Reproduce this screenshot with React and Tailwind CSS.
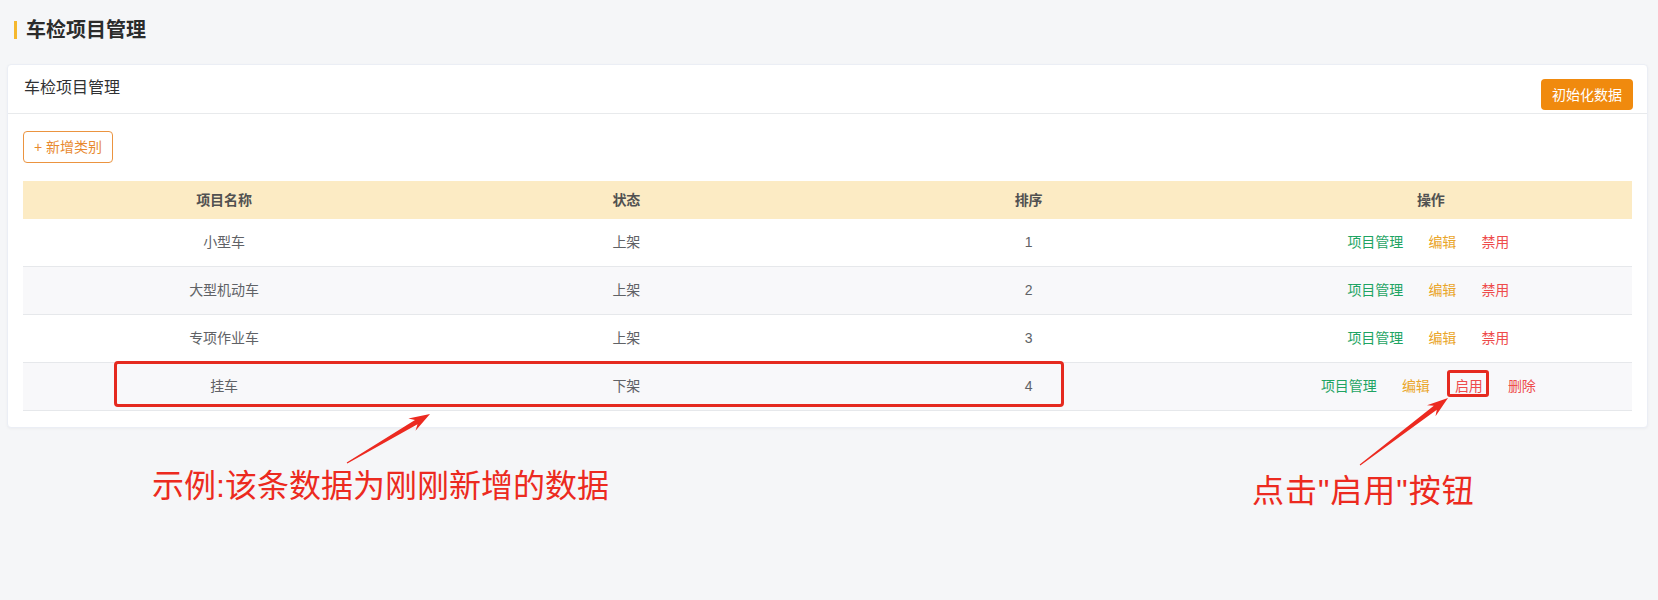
const rows = [
  { name: '小型车', status: '上架', order: 1, enabled: true },
  { name: '大型机动车', status: '上架', order: 2, enabled: true },
  { name: '专项作业车', status: '上架', order: 3, enabled: true },
  { name: '挂车', status: '下架', order: 4, enabled: false },
];

export default function App() {
  return (
    <div className="relative min-h-[600px] w-full overflow-hidden bg-[#f5f6f8] font-['Liberation_Sans','Noto_Sans_CJK_SC',sans-serif] text-[14px] text-[#606266]">
      {/* page title */}
      <div className="flex h-[44px] items-center pl-[14px] pt-4">
        <span className="h-[18px] w-[3px] bg-[#f5b82e]" />
        <h1 className="ml-[9px] text-[20px] font-bold leading-7 text-[#2b2b2b]">车检项目管理</h1>
      </div>

      {/* card */}
      <div className="ml-[7px] mr-[10px] mt-5 rounded-[4px] border border-[#ebeef5] bg-white shadow-[0_1px_3px_rgba(0,0,0,0.04)]">
        <div className="flex h-[49px] items-start justify-between border-b border-[#e8eaec] pl-4 pr-[14px]">
          <span className="pt-[11px] text-[16px] leading-6 text-[#303133]">车检项目管理</span>
          <button className="mt-[14px] h-[31px] rounded-[4px] bg-[#f08a0e] px-[11px] text-[14px] leading-none text-white">
            初始化数据
          </button>
        </div>

        <div className="px-[15px] pb-4 pt-[17px]">
          <button className="h-[32px] rounded-[4px] border border-[#eb9440] bg-white px-[10px] text-[14px] leading-none text-[#e8892f]">
            + 新增类别
          </button>

          <div className="mt-[18px]">
            <div className="grid h-[38px] grid-cols-4 items-center bg-[#fcebc4] text-center font-bold text-[#515151]">
              <div>项目名称</div>
              <div>状态</div>
              <div>排序</div>
              <div>操作</div>
            </div>
            {rows.map((r, i) => (
              <div
                key={r.name}
                className={`grid h-[48px] grid-cols-4 items-center border-b border-[#e6e8eb] text-center ${
                  i % 2 === 1 ? 'bg-[#f8f8fa]' : 'bg-white'
                }`}
              >
                <div>{r.name}</div>
                <div>{r.status}</div>
                <div>{r.order}</div>
                <div className="flex justify-center gap-[25px] pr-[5px]">
                  <span className="text-[#1ea463]">项目管理</span>
                  <span className="text-[#eaa62a]">编辑</span>
                  {r.enabled ? (
                    <span className="text-[#ee4b4b]">禁用</span>
                  ) : (
                    <>
                      <span className="text-[#ee4b4b]">启用</span>
                      <span className="text-[#ee4b4b]">删除</span>
                    </>
                  )}
                </div>
              </div>
            ))}
          </div>
        </div>
      </div>

      {/* annotations */}
      <div className="pointer-events-none absolute left-[114px] top-[361px] h-[46px] w-[950px] rounded-[4px] border-[3px] border-[#e52a1f]" />
      <div className="pointer-events-none absolute left-[1447px] top-[370px] h-[27px] w-[42px] rounded-[3px] border-[3px] border-[#e52a1f]" />

      <svg className="pointer-events-none absolute left-0 top-0" width="1658" height="600" viewBox="0 0 1658 600">
        <polygon
          fill="#ec2a20"
          points="347.3,463.4 417.5,424.3 415.5,430.7 430,414 408.4,418.6 415,420 346.7,462.6"
        />
        <polygon
          fill="#ec2a20"
          points="1360.3,465.4 1436.8,409.7 1435.5,416.3 1448,398 1427,405.2 1433.8,405.7 1359.7,464.6"
        />
      </svg>

      <div className="absolute left-[152px] top-[470px] whitespace-nowrap text-[32px] leading-none text-[#ec2a20]">
        示例:该条数据为刚刚新增的数据
      </div>
      <div className="absolute left-[1252px] top-[475px] whitespace-nowrap text-[32px] leading-none tracking-[1px] text-[#ec2a20]">
        点击"启用"按钮
      </div>
    </div>
  );
}
